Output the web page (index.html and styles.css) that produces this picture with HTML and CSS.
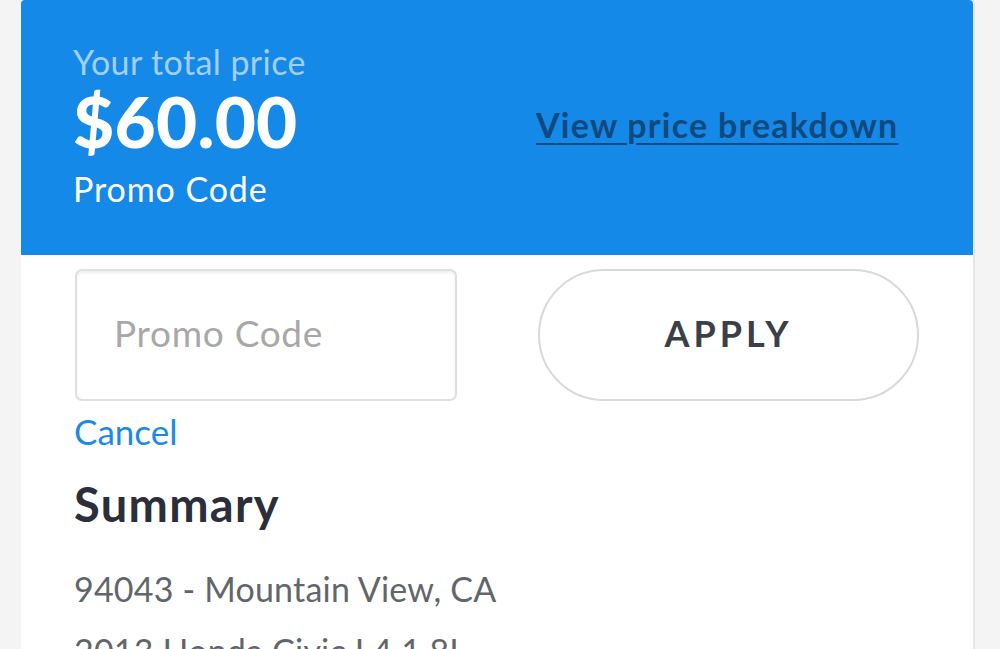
FILE: index.html
```html
<!DOCTYPE html>
<html lang="en">
<head>
<meta charset="utf-8">
<title>Checkout</title>
<link rel="stylesheet" href="styles.css">
</head>
<body>
<div class="card">
  <header class="price-header">
    <div class="price-col">
      <div class="price-label">Your total price</div>
      <div class="price-value">$60.00</div>
      <div class="promo-label">Promo Code</div>
    </div>
    <a class="breakdown-link" href="#">View price breakdown</a>
  </header>
  <section class="promo-section">
    <div class="promo-row">
      <input class="promo-input" type="text" placeholder="Promo Code">
      <button class="apply-btn" type="button">APPLY</button>
    </div>
    <a class="cancel-link" href="#">Cancel</a>
  </section>
  <section class="summary">
    <h2 class="summary-title">Summary</h2>
    <p class="summary-line">94043 - Mountain View, CA</p>
    <p class="summary-line">2013 Honda Civic L4 1.8L</p>
  </section>
</div>
</body>
</html>
```
FILE: styles.css
```css
html, body {
  margin: 0;
  padding: 0;
  height: 100%;
  overflow: hidden;
  background: #f4f4f4;
  font-family: "Lato", "Open Sans", sans-serif;
}

.card {
  margin-left: 21px;
  width: 952px;
  min-height: 800px;
  background: #ffffff;
  border-right: 2px solid #e6e6e6;
  border-radius: 4px 4px 0 0;
}

.price-header {
  height: 255px;
  box-sizing: border-box;
  padding: 41px 0 0 52px;
  background: #1589e8;
  border-radius: 4px 4px 0 0;
  display: grid;
  grid-template-columns: 463px 1fr;
  align-items: start;
}

.price-label {
  font-size: 34px;
  line-height: 41px;
  color: #a3cff5;
  font-weight: 400;
  letter-spacing: 0.4px;
}

.price-value {
  font-size: 71px;
  line-height: 77px;
  font-weight: 900;
  color: #ffffff;
  letter-spacing: 0.3px;
}

.promo-label {
  margin-top: 10px;
  font-size: 34px;
  line-height: 40px;
  color: #ffffff;
  letter-spacing: 0.9px;
}

.breakdown-link {
  margin-top: 64px;
  font-size: 34px;
  line-height: 40px;
  font-weight: 700;
  color: #10497f;
  letter-spacing: 1.25px;
  text-decoration: underline;
  text-decoration-thickness: 2px;
  text-underline-offset: 5px;
  justify-self: start;
}

.promo-section {
  padding: 14px 54px 0 54px;
}

.promo-row {
  display: grid;
  grid-template-columns: 382px 381px;
  column-gap: 81px;
}

.promo-input {
  box-sizing: border-box;
  height: 132px;
  margin: 0;
  padding: 0 0 6px 37px;
  border: 2px solid #dedede;
  border-radius: 7px;
  box-shadow: inset 0 2px 3px rgba(0, 0, 0, 0.07);
  font-family: inherit;
  font-size: 37px;
  letter-spacing: 0.7px;
  color: #333;
  outline: none;
}

.promo-input::placeholder {
  color: #a8a8a8;
}

.apply-btn {
  box-sizing: border-box;
  height: 132px;
  margin: 0;
  padding: 0 0 4px 0;
  border: 2px solid #d9d9d9;
  border-radius: 66px;
  background: #ffffff;
  font-family: inherit;
  font-size: 36px;
  font-weight: 700;
  letter-spacing: 4px;
  color: #3b4048;
}

.cancel-link {
  display: inline-block;
  margin-top: 10px;
  margin-left: -1px;
  font-size: 35px;
  line-height: 40px;
  color: #1a8ae8;
  text-decoration: none;
}

.summary {
  padding: 0 54px 0 53px;
}

.summary-title {
  margin: 25px 0 0 0;
  font-size: 47px;
  line-height: 56px;
  font-weight: 700;
  color: #2b2e3b;
  letter-spacing: 1.3px;
}

.summary-line {
  margin: 0;
  font-size: 34px;
  line-height: 62px;
  color: #62666b;
  letter-spacing: 0.2px;
}

.summary-title + .summary-line {
  margin-top: 26px;
}
```
